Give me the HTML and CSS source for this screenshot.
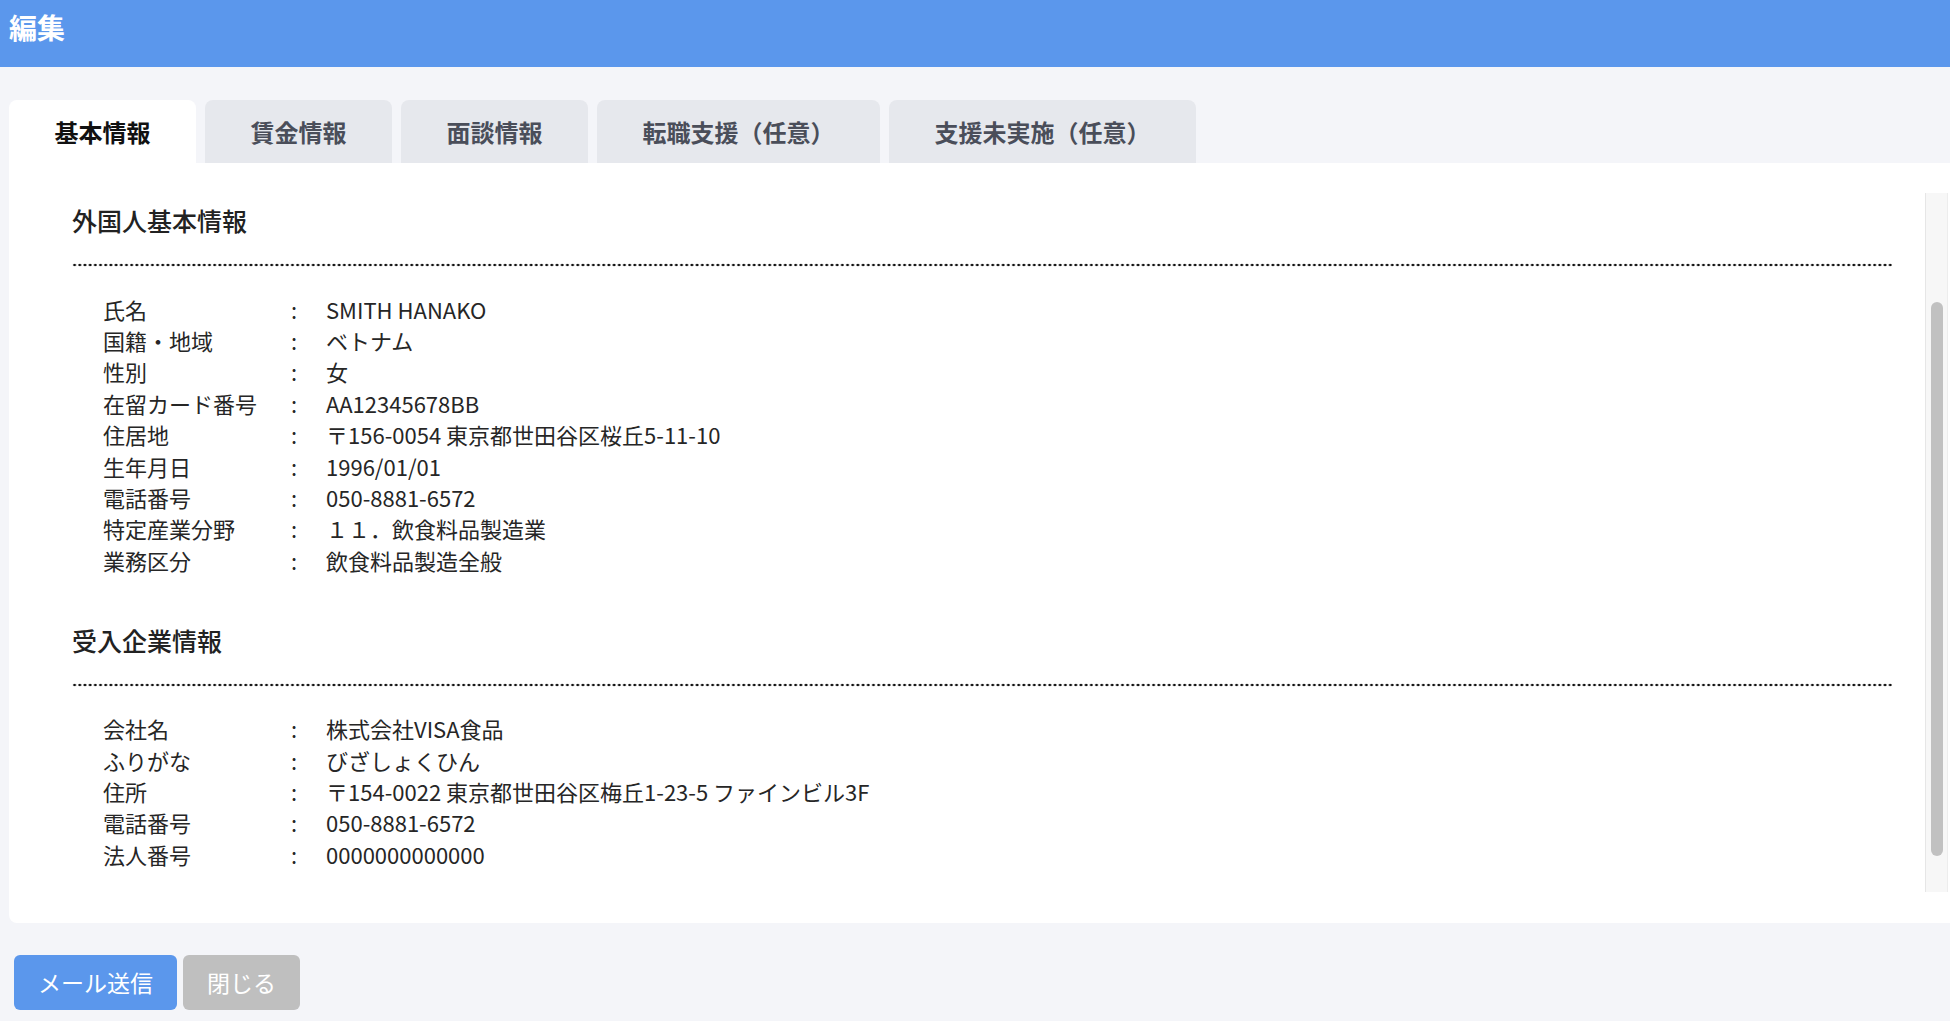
FILE: index.html
```html
<!DOCTYPE html>
<html lang="ja">
<head>
    <meta charset="utf-8">
    <title>編集</title>
    <link rel="stylesheet" href="styles.css">
</head>
<body>
    <header class="page-header">
        <h1 class="page-title">編集</h1>
    </header>

    <nav class="tabs">
        <div class="tab active">基本情報</div>
        <div class="tab">賃金情報</div>
        <div class="tab">面談情報</div>
        <div class="tab">転職支援（任意）</div>
        <div class="tab">支援未実施（任意）</div>
    </nav>

    <main class="panel">
        <div class="scroll-area">
            <div class="scroll-content">
                <section class="info-section">
                    <h2 class="section-title">外国人基本情報</h2>
                    <div class="dots"></div>
                    <dl class="info-list">
                        <dt>氏名</dt><dd class="sep">:</dd><dd>SMITH HANAKO</dd>
                        <dt>国籍・地域</dt><dd class="sep">:</dd><dd>ベトナム</dd>
                        <dt>性別</dt><dd class="sep">:</dd><dd>女</dd>
                        <dt>在留カード番号</dt><dd class="sep">:</dd><dd>AA12345678BB</dd>
                        <dt>住居地</dt><dd class="sep">:</dd><dd>〒156-0054 東京都世田谷区桜丘5-11-10</dd>
                        <dt>生年月日</dt><dd class="sep">:</dd><dd>1996/01/01</dd>
                        <dt>電話番号</dt><dd class="sep">:</dd><dd>050-8881-6572</dd>
                        <dt>特定産業分野</dt><dd class="sep">:</dd><dd>１１．飲食料品製造業</dd>
                        <dt>業務区分</dt><dd class="sep">:</dd><dd>飲食料品製造全般</dd>
                    </dl>
                </section>

                <section class="info-section">
                    <h2 class="section-title">受入企業情報</h2>
                    <div class="dots"></div>
                    <dl class="info-list">
                        <dt>会社名</dt><dd class="sep">:</dd><dd>株式会社VISA食品</dd>
                        <dt>ふりがな</dt><dd class="sep">:</dd><dd>びざしょくひん</dd>
                        <dt>住所</dt><dd class="sep">:</dd><dd>〒154-0022 東京都世田谷区梅丘1-23-5 ファインビル3F</dd>
                        <dt>電話番号</dt><dd class="sep">:</dd><dd>050-8881-6572</dd>
                        <dt>法人番号</dt><dd class="sep">:</dd><dd>0000000000000</dd>
                    </dl>
                </section>
            </div>
            <div class="scrollbar">
                <div class="scrollbar-thumb"></div>
            </div>
        </div>
    </main>

    <footer class="actions">
        <button class="btn btn-primary">メール送信</button>
        <button class="btn btn-disabled">閉じる</button>
    </footer>
</body>
</html>
```

FILE: styles.css
```css
:root {
    --primary-color: #5b97ec;
    --page-bg: #f4f5f9;
    --tab-bg: #e6e8ed;
    --text-color: #262626;
    --muted-btn: #bfbfbf;
}
* {
    box-sizing: border-box;
}
body {
    margin: 0;
    background: var(--page-bg);
    font-family: "Noto Sans CJK JP", "Noto Sans", sans-serif;
    color: var(--text-color);
}
.page-header {
    height: 67px;
    background: var(--primary-color);
    padding: 7px 9px 0;
}
.page-title {
    margin: 0;
    font-size: 28px;
    line-height: 40px;
    font-weight: 700;
    color: #fff;
}
.tabs {
    display: flex;
    gap: 9px;
    margin: 33px 0 0 9px;
}
.tab {
    height: 63px;
    padding: 0 45.5px;
    display: flex;
    align-items: center;
    background: var(--tab-bg);
    border-radius: 8px 8px 0 0;
    font-size: 24px;
    font-weight: 700;
    color: #4a4e5a;
}
.tab.active {
    background: #fff;
    color: #111;
}
.panel {
    margin-left: 9px;
    height: 760px;
    background: #fff;
    border-radius: 0 0 0 8px;
    padding: 30px 2px 31px 0;
}
.scroll-area {
    display: flex;
    height: 699px;
}
.scroll-content {
    flex: 1;
    padding: 9px 33px 0 63px;
    overflow: hidden;
}
.info-section + .info-section {
    margin-top: 45.5px;
}
.section-title {
    margin: 0;
    font-size: 25px;
    line-height: 36px;
    font-weight: 500;
    color: #222;
}
.dots {
    height: 4px;
    margin-top: 25px;
    background-image: radial-gradient(circle, #111 1.2px, transparent 1.6px);
    background-size: 5.2px 4px;
    background-repeat: repeat-x;
}
.info-list {
    display: grid;
    grid-template-columns: 187px 36px 1fr;
    margin: 26.5px 0 0 31px;
    font-size: 22px;
    line-height: 31.4px;
}
.info-list dt,
.info-list dd {
    margin: 0;
    color: var(--text-color);
}
.info-list .sep {
    padding-left: 1px;
}
.scrollbar {
    width: 23px;
    background: #f7f7f7;
    border-left: 1px solid #e6e6e6;
    border-right: 1px solid #ededed;
    padding: 109px 4px 0 5px;
}
.scrollbar-thumb {
    height: 554px;
    background: #c1c1c1;
    border-radius: 6px;
}
.actions {
    display: flex;
    gap: 6px;
    margin: 32px 0 0 14px;
}
.btn {
    height: 55px;
    padding: 0 24px 2px;
    border: none;
    border-radius: 6px;
    font-family: inherit;
    font-size: 23px;
    color: #fff;
    cursor: pointer;
}
.btn-primary {
    background: var(--primary-color);
}
.btn-disabled {
    background: var(--muted-btn);
}
```
